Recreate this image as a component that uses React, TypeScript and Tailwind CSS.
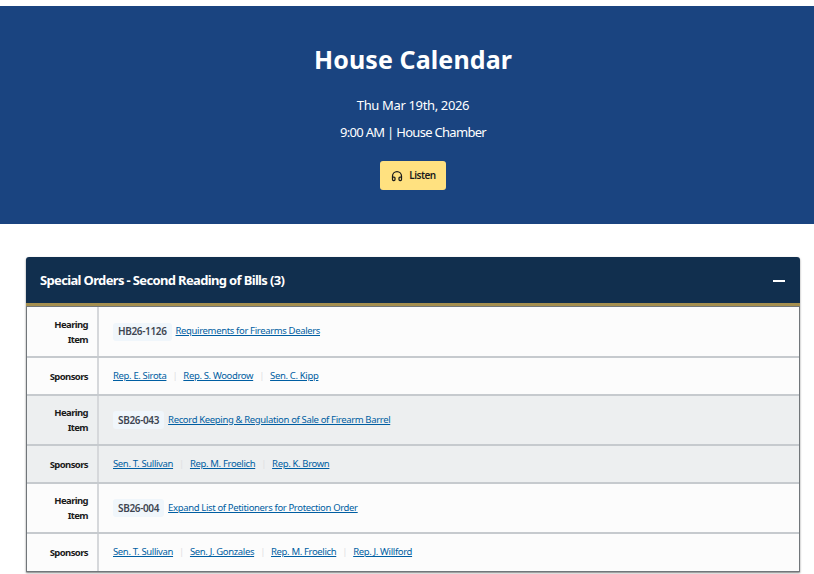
import { Headphones } from "lucide-react";

type Row = {
  label: string[];
  shaded: boolean;
  height: string;
  bill?: string;
  title?: string;
  sponsors?: string[];
};

const rows: Row[] = [
  { label: ["Hearing", "Item"], shaded: false, height: "h-[51px]", bill: "HB26-1126", title: "Requirements for Firearms Dealers" },
  { label: ["Sponsors"], shaded: false, height: "h-[38px]", sponsors: ["Rep. E. Sirota", "Rep. S. Woodrow", "Sen. C. Kipp"] },
  { label: ["Hearing", "Item"], shaded: true, height: "h-[50px]", bill: "SB26-043", title: "Record Keeping & Regulation of Sale of Firearm Barrel" },
  { label: ["Sponsors"], shaded: true, height: "h-[38px]", sponsors: ["Sen. T. Sullivan", "Rep. M. Froelich", "Rep. K. Brown"] },
  { label: ["Hearing", "Item"], shaded: false, height: "h-[50px]", bill: "SB26-004", title: "Expand List of Petitioners for Protection Order" },
  { label: ["Sponsors"], shaded: false, height: "h-[37px]", sponsors: ["Sen. T. Sullivan", "Sen. J. Gonzales", "Rep. M. Froelich", "Rep. J. Willford"] },
];

function CalendarRow({ row, last }: { row: Row; last: boolean }) {
  return (
    <div
      className={`flex ${row.height} ${row.shaded ? "bg-[#edeff0]" : "bg-[#fcfcfc]"} ${
        last ? "" : "border-b-2 border-[#c6cace]"
      }`}
    >
      <div className="w-[72px] shrink-0 flex flex-col justify-center items-end pr-[9px] border-r-2 border-[#d6d8db] text-[9.5px] leading-[15px] font-bold tracking-[-0.6px] text-[#1b1b1b]">
        {row.label.map((l) => (
          <span key={l}>{l}</span>
        ))}
      </div>
      <div className="flex-1 flex items-center pl-[14px] text-[9.5px] tracking-[-0.35px] text-[#005ea2]">
        {row.bill ? (
          <>
            <span className="bg-[#f0f6fb] rounded-[3px] px-[5px] h-[18px] flex items-center mr-[4px] text-[10px] font-semibold tracking-[-0.35px] text-[#3d4551]">
              {row.bill}
            </span>
            <a href="#" className="underline">
              {row.title}
            </a>
          </>
        ) : (
          row.sponsors?.map((s, i) => (
            <span key={s} className="flex items-center">
              {i > 0 && <span className="mx-[6px] text-[#dfe1e2]">|</span>}
              <a href="#" className="underline">
                {s}
              </a>
            </span>
          ))
        )}
      </div>
    </div>
  );
}

export default function App() {
  return (
    <div className="bg-white min-h-[574px] pt-[6px] font-['Noto_Sans','Lato',sans-serif]">
      <header className="bg-[#1a4480] h-[218px] flex flex-col items-center pl-[12px] text-white">
        <h1 className="mt-[36px] text-[25px] leading-[35px] font-bold tracking-[0.1px]">House Calendar</h1>
        <p className="mt-[19px] text-[13px] leading-[18px] tracking-[-0.35px]">Thu Mar 19th, 2026</p>
        <p className="mt-[9px] text-[13px] leading-[18px] tracking-[-0.7px]">9:00 AM | House Chamber</p>
        <button
          type="button"
          className="mt-[20px] w-[66px] h-[29px] bg-[#ffe180] rounded-[3px] flex items-center justify-center gap-[6px] pl-[1px] text-[10px] font-semibold tracking-[-0.5px] text-[#1b1b1b]"
        >
          <Headphones size={12} strokeWidth={2.5} />
          Listen
        </button>
      </header>

      <section className="mx-[26px] mt-[33px] w-[774px] rounded-t-[3px] shadow-[0_1px_2px_rgba(0,0,0,0.5)]">
        <div className="h-[46px] bg-[#112f4e] rounded-t-[3px] flex items-center justify-between pl-[14px] pr-[15px] pt-[2px] text-white">
          <h2 className="text-[13px] font-bold tracking-[-0.65px]">Special Orders - Second Reading of Bills (3)</h2>
          <span className="w-[12px] h-[2px] bg-white" />
        </div>
        <div className="h-[3px] bg-[#a58f4f]" />
        <div className="border border-[#71767a]">
          {rows.map((row, i) => (
            <CalendarRow key={i} row={row} last={i === rows.length - 1} />
          ))}
        </div>
      </section>
    </div>
  );
}
